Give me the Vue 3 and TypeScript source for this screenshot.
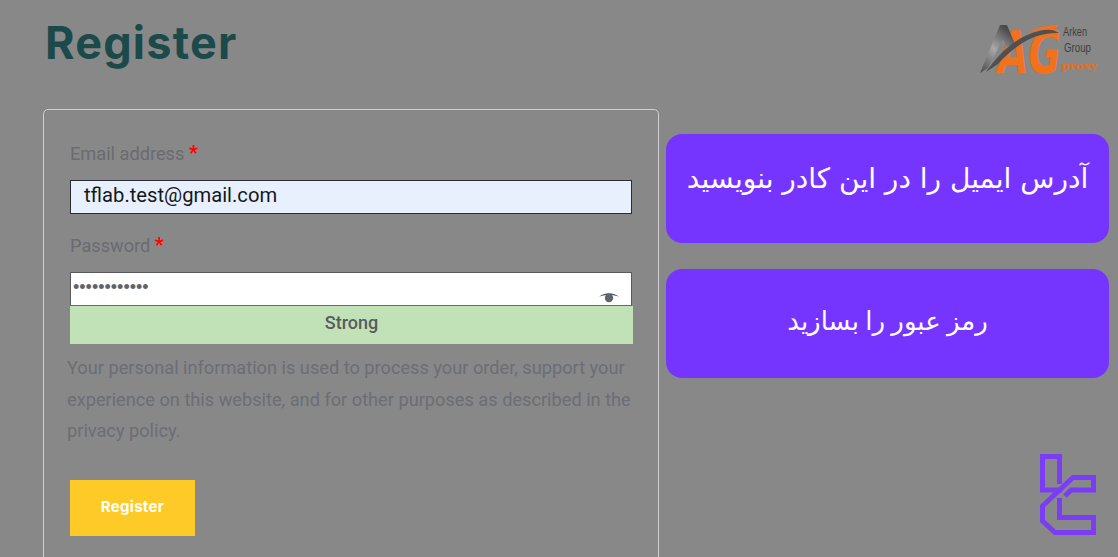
<script setup lang="ts">
const email: string = 'tflab.test@gmail.com'
const dots: string = '••••••••••••'
</script>

<template>
  <div class="page">
    <header class="top">
      <h1 class="title">Register</h1>
      <svg class="logo" viewBox="0 0 120 56" width="120" height="56">
        <defs>
          <linearGradient id="legGrad" x1="0" y1="1" x2="0.6" y2="0">
            <stop offset="0" stop-color="#4a4a4a" />
            <stop offset="0.55" stop-color="#a8a8a8" />
            <stop offset="1" stop-color="#4c4c4c" />
          </linearGradient>
        </defs>
        <text x="20" y="51" class="ag" textLength="63" lengthAdjust="spacingAndGlyphs">AG</text>
        <path d="M50 11 C58 5 70 3 82 3 L74 9 C66 7 58 8 50 11 Z" fill="#f2711c" />
        <path d="M2 51 L22 3 L29 3 L37 22 L30 28 L25 17 L10 46 Z" fill="url(#legGrad)" />
        <path d="M8 50 C20 32 40 12 66 8 C72 7 77 8 81 11 C60 10 40 20 20 42 Z" fill="#505050" />
        <text x="85" y="14" class="small" textLength="24" lengthAdjust="spacingAndGlyphs">Arken</text>
        <text x="86" y="30" class="small" textLength="27" lengthAdjust="spacingAndGlyphs">Group</text>
        <text x="83" y="48" class="proxy" textLength="36" lengthAdjust="spacingAndGlyphs">proxy</text>
      </svg>
    </header>

    <main class="content">
      <form class="card" @submit.prevent>
        <label class="label">Email address <span class="req">*</span></label>
        <div class="input filled">{{ email }}</div>

        <label class="label second">Password <span class="req">*</span></label>
        <div class="input password">
          <span class="dots">{{ dots }}</span>
          <svg class="eye" viewBox="0 0 20 12" width="20" height="12">
            <path d="M0 5 C5 0 15 0 20 5 C15 2.4 5 2.4 0 5 Z" fill="#555" />
            <circle cx="10" cy="6" r="4.2" fill="#5b6670" />
          </svg>
        </div>
        <div class="strength">Strong</div>

        <p class="policy">
          Your personal information is used to process your order, support your
          experience on this website, and for other purposes as described in the
          privacy policy.
        </p>

        <button class="submit" type="button"><span>Register</span></button>
      </form>

      <aside class="notes">
        <div class="note first" dir="rtl">آدرس ایمیل را در این کادر بنویسید</div>
        <div class="note last" dir="rtl">رمز عبور را بسازید</div>
      </aside>
    </main>

    <svg class="brand" viewBox="0 0 56 82" width="56" height="82" fill="none" stroke="#7a3df5" stroke-width="5">
      <path d="M22 36 H2.5 V2.5 H19.5 V30" />
      <path d="M25 42 L31 36 H53.5 V23.5 H33 L2.5 52 V67 L15 78.5 H53.5 V63.5 H19.5 V44" />
    </svg>
  </div>
</template>

<style>
html, body { margin: 0; background: #888888; overflow: hidden; }
</style>

<style scoped>
.page {
  position: relative;
  width: 1118px;
  height: 557px;
  overflow: hidden;
  background: #888888;
  box-sizing: border-box;
  padding: 0 18px 0 43px;
  font-family: Roboto, "Liberation Sans", sans-serif;
}
.top {
  height: 109px;
  display: flex;
  justify-content: space-between;
  align-items: flex-start;
}
.title {
  margin: 14px 0 0 2px;
  font-family: Inter, "Open Sans", sans-serif;
  font-size: 45px;
  line-height: 58px;
  font-weight: 700;
  letter-spacing: 1.2px;
  color: #1c4a4a;
}
.logo { margin-top: 22px; margin-right: 2px; }
.ag {
  font-family: "DejaVu Sans", sans-serif;
  font-size: 58px;
  font-weight: 700;
  font-style: italic;
  fill: #f2711c;
}
.small {
  font-family: "Liberation Sans", sans-serif;
  font-size: 12px;
  fill: #3f3f3f;
}
.proxy {
  font-family: "DejaVu Serif", serif;
  font-size: 11px;
  font-weight: 700;
  fill: #e2701f;
}
.content {
  display: flex;
  gap: 7px;
  align-items: flex-start;
}
.card {
  width: 616px;
  height: 480px;
  flex: none;
  box-sizing: border-box;
  border: 1px solid #cfcfcf;
  border-radius: 5px;
  padding: 32px 26px 0 26px;
  display: flex;
  flex-direction: column;
  align-items: flex-start;
}
.label {
  font-size: 18.2px;
  line-height: 23px;
  color: #686b71;
  height: 23px;
}
.label.second { margin-top: 20px; }
.req { color: #f00; font-size: 20px; font-weight: 700; }
.input {
  box-sizing: border-box;
  width: 562px;
  height: 34px;
  margin-top: 15px;
  flex: none;
}
.filled {
  background: #e8f0fe;
  border: 1px solid #2a2d33;
  color: #15171c;
  font-size: 20.2px;
  line-height: 29px;
  padding-left: 13px;
}
.password {
  background: #fff;
  border: 1px solid #5a5a5a;
  border-bottom-color: #6a6a6a;
  margin-top: 15px;
  position: relative;
  display: flex;
  justify-content: space-between;
}
.dots {
  font-family: "Liberation Sans", sans-serif;
  font-size: 18px;
  line-height: 28px;
  color: #5e646a;
  padding-left: 2px;
}
.eye { margin: 19px 12px 0 0; }
.strength {
  width: 563px;
  height: 38px;
  flex: none;
  background: #c1e1b6;
  color: #565c60;
  font-size: 18px;
  font-weight: 500;
  line-height: 34px;
  text-align: center;
}
.policy {
  margin: 8px 0 0 -3px;
  width: 572px;
  font-size: 18.2px;
  line-height: 31.6px;
  color: #6b6e73;
}
.submit {
  margin-top: 33px;
  width: 125px;
  height: 56px;
  border: 0;
  padding: 0 0 3px;
  background: #fdca27;
  color: #fff;
  font-family: Inter, sans-serif;
  font-size: 15px;
  font-weight: 700;
  letter-spacing: 0.3px;
}
.notes {
  display: flex;
  flex-direction: column;
  gap: 26px;
  margin-top: 25px;
}
.note {
  width: 443px;
  height: 109px;
  box-sizing: border-box;
  border-radius: 16px;
  background: #7635ff;
  color: #fff;
  font-family: "DejaVu Sans", sans-serif;
  display: flex;
  align-items: center;
  justify-content: center;
}
.first { font-size: 28px; padding-bottom: 20px; }
.last { font-size: 26px; word-spacing: -2px; padding-bottom: 6px; }
.brand {
  position: absolute;
  left: 1040px;
  top: 454px;
}
</style>
